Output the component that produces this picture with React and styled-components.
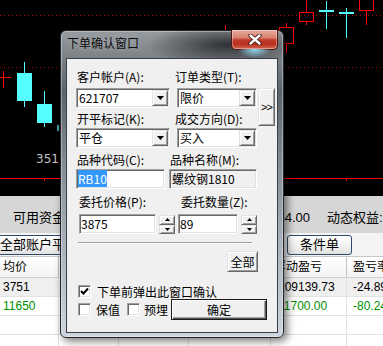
import React from 'react';
import styled, { createGlobalStyle } from 'styled-components';

const GlobalStyle = createGlobalStyle`
  html, body { margin: 0; padding: 0; background: #000; overflow: hidden; }
  #root { width: 383px; height: 346px; }
`;

const CYAN = '#54ffff';
const RED = '#ff0000';

const Screen = styled.div`
  position: relative;
  width: 383px;
  height: 346px;
  overflow: hidden;
  display: flex;
  flex-direction: column;
  background: #fff;
  font-family: "Liberation Sans", "Noto Sans CJK SC", sans-serif;
  color: #000;
`;

const ChartSvg = styled.svg`
  display: block;
  flex: none;
  background: #000;
`;

const StatusBar = styled.div`
  flex: none;
  height: 37px;
  box-sizing: border-box;
  padding: 7px 0 0 13px;
  display: flex;
  align-items: center;
  gap: 17px;
  background: #d6d6d6;
  font-size: 13px;
  line-height: 18px;
  white-space: nowrap;
`;

const StatusField = styled.div`
  display: flex;
  width: ${p => p.$w}px;
`;

const StatusValue = styled.span`
  flex: 1;
  text-align: right;
`;

const ButtonRow = styled.div`
  flex: none;
  height: 23px;
  box-sizing: border-box;
  padding-top: 2px;
  display: flex;
  gap: 8px;
  margin-left: -6px;
  background: #f4f4f4;
`;

const AppButton = styled.div`
  flex: none;
  width: ${p => p.$w}px;
  height: 20px;
  box-sizing: border-box;
  border: 1px solid #2c4a6e;
  border-radius: 3px;
  background: linear-gradient(180deg, #ffffff 0%, #f2f2f2 50%, #e2e2e2 100%);
  font-size: 13px;
  line-height: 18px;
  padding: 0 5px;
  text-align: ${p => (p.$center ? 'center' : 'left')};
  white-space: nowrap;
`;

const TableRow = styled.div`
  flex: none;
  display: grid;
  grid-template-columns: 59px 60px 70px 82px 76px 1fr;
  height: ${p => p.$h || 19}px;
  box-sizing: border-box;
  border-bottom: 1px solid #e2e2e2;
  background: ${p => p.$bg || '#fff'};
  color: ${p => p.$color || '#000'};
  font-size: 12px;
  line-height: 18px;
`;

const HeaderRow = styled(TableRow)`
  border-top: 1px solid #c8c8c8;
  border-bottom: 1px solid #d0d0d0;
  background: linear-gradient(180deg, #ffffff 0%, #f3f3f3 100%);
  line-height: 20px;
`;

const Cell = styled.div`
  padding-left: 3px;
  border-right: 1px solid ${p => (p.$head ? '#c4c4c4' : '#e2e2e2')};
  white-space: nowrap;
  overflow: hidden;
  &:last-child { padding-left: 6px; border-right: none; }
`;

/* ---------- dialog ---------- */

const Window = styled.div`
  position: absolute;
  left: 60px;
  top: 30px;
  width: 224px;
  height: 308px;
  box-sizing: border-box;
  border: 1px solid #23272b;
  border-radius: 6px;
  background:
    radial-gradient(ellipse 80px 22px at 165px 14px, rgba(30, 33, 37, 0.85), rgba(30, 33, 37, 0) 100%),
    linear-gradient(180deg, #969ba0 0%, #7c8186 9%, #5e6368 20%, #7e868e 40%, #aab3bc 70%, #cdd5de 100%);
  box-shadow: inset 0 0 0 1px rgba(255, 255, 255, 0.35), 3px 3px 9px rgba(0, 0, 0, 0.55);
  display: flex;
  flex-direction: column;
  font-family: "Noto Sans CJK SC", "Liberation Sans", sans-serif;
  font-size: 12px;
  color: #000;
`;

const TitleBar = styled.div`
  flex: none;
  height: 27px;
  display: flex;
  align-items: flex-start;
  padding-left: 6px;
`;

const TitleText = styled.div`
  margin-top: 5px;
  line-height: 14px;
  color: #0c0c0c;
  text-shadow: 0 0 6px rgba(255, 255, 255, 0.35);
`;

const CloseButton = styled.div`
  position: relative;
  margin: -1px 5px 0 auto;
  width: 47px;
  height: 20px;
  box-sizing: border-box;
  border: 1px solid #4e1710;
  border-top: none;
  border-radius: 0 0 5px 5px;
  background: linear-gradient(180deg, #e9ab9c 0%, #d98270 40%, #c23a2a 52%, #b9301f 75%, #d36a55 100%);
  box-shadow: inset 0 0 0 1px rgba(255, 255, 255, 0.35);
  display: flex;
  align-items: center;
  justify-content: center;
  &::after {
    content: '';
    position: absolute;
    left: 6px;
    right: 6px;
    top: 100%;
    height: 9px;
    background: radial-gradient(ellipse at 50% 0%, rgba(150, 230, 255, 0.95), rgba(150, 230, 255, 0) 70%);
  }
`;

const Client = styled.div`
  flex: 1;
  margin: 0 5px 4px 5px;
  border: 1px solid #3a3f44;
  background: #f0f0f0;
  padding: 11px 0 0 9px;
  display: flex;
  flex-direction: column;
  align-items: flex-start;
`;

const TopGrid = styled.div`
  display: grid;
  grid-template-columns: 94px 80px 17px;
  grid-template-rows: 14px 4px 20px 4px 14px 2px 20px;
  column-gap: 7px;
`;

const Label = styled.div`
  line-height: 14px;
  white-space: nowrap;
  padding-left: ${p => p.$indent ?? 1}px;
  margin-left: ${p => p.$shift || 0}px;
  grid-row: ${p => p.$row || 'auto'};
  grid-column: ${p => p.$col || 'auto'};
`;

const sunken = `
  box-sizing: border-box;
  border: 1px solid;
  border-color: #a0a0a0 #ffffff #ffffff #a0a0a0;
  box-shadow: inset 1px 1px 0 #696969, inset -1px -1px 0 #e3e3e3;
`;

const raised = `
  box-sizing: border-box;
  background: #f0f0f0;
  border: 1px solid;
  border-color: #e3e3e3 #696969 #696969 #e3e3e3;
  box-shadow: inset 1px 1px 0 #ffffff, inset -1px -1px 0 #a0a0a0;
`;

const SelectBox = styled.div`
  ${sunken}
  grid-row: ${p => p.$row};
  height: 20px;
  background: #fff;
  padding: 1px;
  display: flex;
  align-items: center;
`;

const SelectValue = styled.span`
  flex: 1;
  padding-left: 1px;
  line-height: 16px;
  white-space: nowrap;
`;

const DropButton = styled.div`
  ${raised}
  flex: none;
  width: 16px;
  height: 16px;
  display: flex;
  align-items: center;
  justify-content: center;
`;

const MoreButton = styled.div`
  ${raised}
  grid-column: 3;
  grid-row: 3 / 6;
  margin-left: -6px;
  width: 17px;
  display: flex;
  align-items: center;
  justify-content: center;
  font-family: "Liberation Sans", sans-serif;
  font-size: 11px;
  letter-spacing: -1px;
`;

const FieldRow = styled.div`
  display: flex;
  gap: ${p => p.$gap}px;
  margin-top: ${p => p.$top}px;
  margin-left: ${p => p.$left || 0}px;
`;

const Field = styled.div`
  display: flex;
  flex-direction: column;
  gap: ${p => p.$gap}px;
  width: ${p => p.$w}px;
`;

const InputLine = styled.div`
  display: flex;
  gap: 3px;
  height: 20px;
`;

const TextInput = styled.div`
  ${sunken}
  width: ${p => p.$w}px;
  height: 20px;
  padding: 1px ${p => (p.$ro ? 2 : 1)}px;
  background: ${p => (p.$ro ? '#f0f0f0' : '#fff')};
  line-height: 16px;
  white-space: nowrap;
  overflow: hidden;
`;

const Selected = styled.span`
  background: #3399ff;
  color: #fff;
`;

const Spinner = styled.div`
  margin-top: 1px;
  display: flex;
  flex-direction: column;
`;

const SpinButton = styled.div`
  ${raised}
  width: 16px;
  height: 10px;
  display: flex;
  align-items: center;
  justify-content: center;
`;

const Separator = styled.div`
  margin: 8px 0 0 2px;
  width: 174px;
  height: 0;
  border-top: 1px solid #a0a0a0;
  border-bottom: 1px solid #ffffff;
`;

const PushButton = styled.div`
  ${raised}
  flex: none;
  width: ${p => p.$w}px;
  height: 21px;
  margin-top: ${p => p.$top || 0}px;
  margin-left: ${p => p.$left || 0}px;
  display: flex;
  align-items: center;
  justify-content: center;
  line-height: 14px;
  ${p => p.$default && `
    border: 1px solid #1a1a1a;
    box-shadow: inset 1px 1px 0 #ffffff, inset -1px -1px 0 #555555, inset -2px -2px 0 #a0a0a0;
  `}
`;

const CheckLine = styled.div`
  display: flex;
  align-items: center;
  margin-top: ${p => p.$top}px;
  line-height: 13px;
  white-space: nowrap;
`;

const CheckBox = styled.div`
  ${sunken}
  flex: none;
  width: 13px;
  height: 13px;
  background: #fff;
  margin-left: ${p => p.$left}px;
  display: flex;
  align-items: center;
  justify-content: center;
`;

const CheckText = styled.span`
  margin-left: ${p => p.$left}px;
`;

const DownArrow = () => (
  <svg width="7" height="4" viewBox="0 0 7 4"><polygon points="0,0 7,0 3.5,4" fill="#000" /></svg>
);

const SpinArrow = ({ up }) => (
  <svg width="5" height="3" viewBox="0 0 5 3">
    <polygon points={up ? '2.5,0 5,3 0,3' : '0,0 5,0 2.5,3'} fill="#000" />
  </svg>
);

const Check = () => (
  <svg width="9" height="9" viewBox="0 0 9 9">
    <polyline points="1,4 3.5,6.5 8,1.5" fill="none" stroke="#000" strokeWidth="2" />
  </svg>
);

const Select = ({ row, children }) => (
  <SelectBox $row={row}>
    <SelectValue>{children}</SelectValue>
    <DropButton><DownArrow /></DropButton>
  </SelectBox>
);

const Spin = () => (
  <Spinner>
    <SpinButton><SpinArrow up /></SpinButton>
    <SpinButton><SpinArrow /></SpinButton>
  </Spinner>
);

function PriceChart() {
  return (
    <ChartSvg width="383" height="196" viewBox="0 0 383 196">
      <line x1="0" y1="15.5" x2="383" y2="15.5" stroke="#b00000" strokeDasharray="1 3" />
      <line x1="0" y1="67.5" x2="383" y2="67.5" stroke="#b00000" strokeDasharray="1 3" />

      <line x1="0" y1="77.5" x2="11" y2="77.5" stroke={RED} />
      <line x1="3.5" y1="71" x2="3.5" y2="88" stroke={RED} />

      <line x1="24.5" y1="62" x2="24.5" y2="107" stroke={CYAN} />
      <rect x="17" y="73" width="15" height="28" fill={CYAN} />
      <line x1="44.5" y1="91" x2="44.5" y2="127" stroke={CYAN} />
      <rect x="37" y="104" width="15" height="19" fill={CYAN} />
      <rect x="57" y="125" width="2" height="6" fill="#3aa6a6" />
      <text x="36" y="163" fill="#c4c4c4" fontSize="12" fontFamily="DejaVu Sans, sans-serif">351</text>

      <line x1="225.5" y1="25" x2="225.5" y2="30" stroke={RED} />

      <line x1="286.5" y1="23" x2="286.5" y2="27.5" stroke={RED} />
      <rect x="279.5" y="27.5" width="14" height="16" fill="none" stroke={RED} />
      <line x1="286.5" y1="43.5" x2="286.5" y2="53" stroke={RED} />

      <line x1="306.5" y1="0" x2="306.5" y2="12.5" stroke={RED} />
      <rect x="299.5" y="12.5" width="14" height="9" fill="none" stroke={RED} />
      <line x1="306.5" y1="21.5" x2="306.5" y2="25" stroke={RED} />

      <rect x="319" y="10" width="15" height="2" fill={CYAN} />
      <line x1="326.5" y1="1" x2="326.5" y2="29" stroke={CYAN} />
      <rect x="339" y="12" width="15" height="2" fill={CYAN} />
      <line x1="346.5" y1="8" x2="346.5" y2="38" stroke={CYAN} />

      <rect x="359.5" y="-1" width="14" height="11.5" fill="none" stroke={RED} />
      <line x1="366.5" y1="10.5" x2="366.5" y2="25" stroke={RED} />

      <line x1="0" y1="178.5" x2="383" y2="178.5" stroke={RED} />
      <line x1="44.5" y1="178" x2="44.5" y2="181" stroke={RED} />
      <line x1="346.5" y1="178" x2="346.5" y2="181" stroke={RED} />
    </ChartSvg>
  );
}

const positions = [
  { id: 'rb', price: '3751', pl: '-209139.73', rate: '-24.89%' },
  { id: 'ru', price: '11650', pl: '-11700.00', rate: '-80.24%', color: '#009000' },
];

function OrderDialog() {
  return (
    <Window>
      <TitleBar>
        <TitleText>下单确认窗口</TitleText>
        <CloseButton>
          <svg width="14" height="11" viewBox="0 0 14 11">
            <path d="M2.5 1.5 L11.5 9.5 M11.5 1.5 L2.5 9.5" stroke="#3b1a14" strokeWidth="4.2" strokeLinecap="round" />
            <path d="M2.5 1.5 L11.5 9.5 M11.5 1.5 L2.5 9.5" stroke="#fff" strokeWidth="2.4" strokeLinecap="round" />
          </svg>
        </CloseButton>
      </TitleBar>

      <Client>
        <TopGrid>
          <Label $row={1} $col={1}>客户帐户(A):</Label>
          <Label $row={1} $col={2} $shift={-3}>订单类型(T):</Label>
          <Select row={3}>621707</Select>
          <Select row={3}>限价</Select>
          <MoreButton>&gt;&gt;</MoreButton>
          <Label $row={5} $col={1}>开平标记(K):</Label>
          <Label $row={5} $col={2} $shift={-3}>成交方向(D):</Label>
          <Select row={7}>平仓</Select>
          <Select row={7}>买入</Select>
        </TopGrid>

        <FieldRow $gap={4} $top={5}>
          <Field $w={89} $gap={2}>
            <Label>品种代码(C):</Label>
            <TextInput $w={89}><Selected>RB10</Selected></TextInput>
          </Field>
          <Field $w={88} $gap={2}>
            <Label>品种名称(M):</Label>
            <TextInput $w={88} $ro>螺纹钢1810</TextInput>
          </Field>
        </FieldRow>

        <FieldRow $gap={3} $top={6} $left={3}>
          <Field $w={96} $gap={5}>
            <Label $indent={0}>委托价格(P):</Label>
            <InputLine>
              <TextInput $w={77}>3875</TextInput>
              <Spin />
            </InputLine>
          </Field>
          <Field $w={82} $gap={5}>
            <Label $indent={3}>委托数量(Z):</Label>
            <InputLine>
              <TextInput $w={60}>89</TextInput>
              <Spin />
            </InputLine>
          </Field>
        </FieldRow>

        <Separator />
        <PushButton $w={31} $top={7} $left={151}>全部</PushButton>

        <CheckLine $top={13}>
          <CheckBox $left={2}><Check /></CheckBox>
          <CheckText $left={6}>下单前弹出此窗口确认</CheckText>
        </CheckLine>
        <CheckLine $top={1}>
          <CheckBox $left={2} />
          <CheckText $left={5}>保值</CheckText>
          <CheckBox $left={7} />
          <CheckText $left={4}>预埋</CheckText>
          <PushButton $w={96} $left={3} $default>确定</PushButton>
        </CheckLine>
      </Client>
    </Window>
  );
}

export default function App() {
  return (
    <Screen>
      <GlobalStyle />
      <PriceChart />
      <StatusBar>
        <StatusField $w={297}>
          <span>可用资金:</span>
          <StatusValue>1523664.00</StatusValue>
        </StatusField>
        <span>动态权益:</span>
      </StatusBar>
      <ButtonRow>
        <AppButton $w={90}>全部账户平仓</AppButton>
        <AppButton $w={88} $center>批量撤单</AppButton>
        <AppButton $w={91} $center>快捷平仓</AppButton>
        <AppButton $w={65} $center>条件单</AppButton>
      </ButtonRow>
      <HeaderRow $h={22}>
        <Cell $head>均价</Cell>
        <Cell $head />
        <Cell $head />
        <Cell $head />
        <Cell $head>浮动盈亏</Cell>
        <Cell $head>盈亏率</Cell>
      </HeaderRow>
      {positions.map((p, i) => (
        <TableRow key={p.id} $bg={i % 2 === 0 ? '#efefef' : '#fff'} $color={p.color}>
          <Cell>{p.price}</Cell>
          <Cell />
          <Cell />
          <Cell />
          <Cell>{p.pl}</Cell>
          <Cell>{p.rate}</Cell>
        </TableRow>
      ))}
      {[0, 1].map(i => (
        <TableRow key={'empty' + i}>
          <Cell /><Cell /><Cell /><Cell /><Cell /><Cell />
        </TableRow>
      ))}
      <OrderDialog />
    </Screen>
  );
}
